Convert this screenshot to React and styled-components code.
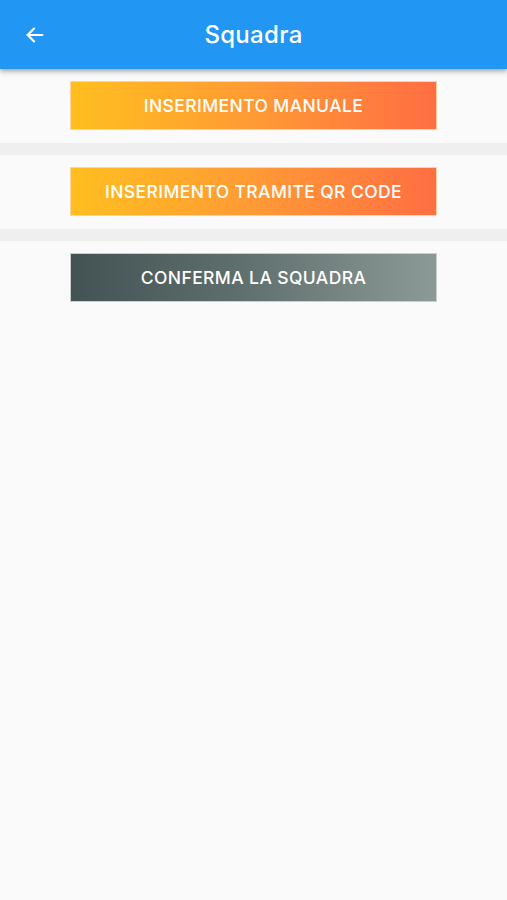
import React from 'react';
import styled, { createGlobalStyle } from 'styled-components';

const GlobalStyle = createGlobalStyle`
    html, body {
        margin:0;
        padding:0;
        background-color:#fafafa;
        font-family: 'Inter', 'Roboto', sans-serif;
    }
`;

const Page = styled.div`
    min-height:900px;
    background-color:#fafafa;
    display:flex;
    flex-direction:column;
`;

const AppBar = styled.header`
    height:69px;
    background-color:#2196f3;
    box-shadow: 0 2px 4px rgba(0,0,0,0.25), 0 4px 6px rgba(0,0,0,0.10);
    display:flex;
    align-items:center;
    position:relative;
    z-index:1;
`;

const BackButton = styled.button`
    all:unset;
    width:70px;
    height:69px;
    display:flex;
    align-items:center;
    justify-content:center;
    cursor:pointer;
`;

const Title = styled.h1`
    flex:1;
    margin:0 70px 0 0;
    text-align:center;
    color:white;
    font-size:24px;
    font-weight:500;
    letter-spacing:0.3px;
`;

const Row = styled.div`
    display:flex;
    justify-content:center;
    padding:12px 0 13px;
`;

const Divider = styled.div`
    height:12px;
    background-color:#efefef;
`;

const ActionButton = styled.button`
    all:unset;
    width:367px;
    height:49px;
    display:flex;
    align-items:center;
    justify-content:center;
    color:white;
    font-family: 'Inter', 'Roboto', sans-serif;
    font-size:17.5px;
    font-weight:500;
    letter-spacing:0.4px;
    cursor:pointer;
    background:${props => (props.dark
        ? 'linear-gradient(90deg, #435354 0%, #5e6e6c 45%, #8c9a97 100%)'
        : 'linear-gradient(90deg, #ffbf1f 0%, #ff9a35 50%, #ff6e43 100%)')};
    border:1px solid ${props => (props.dark ? '#c9cfcd' : '#ffd3a0')};
    box-sizing:border-box;
`;

const Arrow = () => (
    <svg width="22" height="22" viewBox="0 0 24 24" fill="none" stroke="white" strokeWidth="2.4" strokeLinecap="round" strokeLinejoin="round">
        <path d="M20 12H4" />
        <path d="M11 5l-7 7 7 7" />
    </svg>
);

export default function App() {
    return (
        <Page>
            <GlobalStyle />
            <AppBar>
                <BackButton aria-label="back"><Arrow /></BackButton>
                <Title>Squadra</Title>
            </AppBar>
            <Row>
                <ActionButton>INSERIMENTO MANUALE</ActionButton>
            </Row>
            <Divider />
            <Row>
                <ActionButton>INSERIMENTO TRAMITE QR CODE</ActionButton>
            </Row>
            <Divider />
            <Row>
                <ActionButton dark>CONFERMA LA SQUADRA</ActionButton>
            </Row>
        </Page>
    );
}
